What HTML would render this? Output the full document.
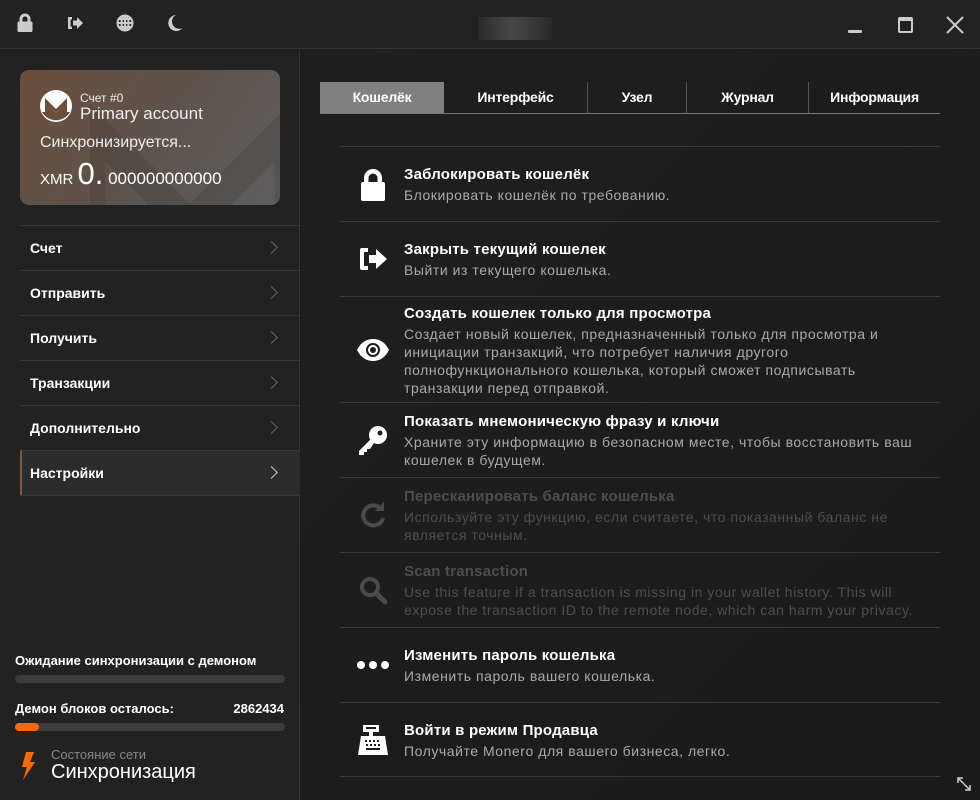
<!DOCTYPE html>
<html><head><meta charset="utf-8"><style>
*{margin:0;padding:0;box-sizing:border-box}
body{width:980px;height:800px;overflow:hidden;background:#1d1d1d;font-family:"Liberation Sans",sans-serif;color:#fff;position:relative}
.top{position:absolute;left:0;top:0;width:980px;height:49px;background:#222;border-bottom:1px solid #333}
.side{position:absolute;left:0;top:50px;width:300px;height:750px;background:#222;border-right:1px solid #333}
.main{position:absolute;left:301px;top:50px;width:679px;height:750px;background:linear-gradient(135deg,#1f1f1f,#1a1a1a)}
.card{position:absolute;left:20px;top:20px;width:260px;height:135px;border-radius:9px;background:linear-gradient(125deg,#6c4e3b 0%,#5d534d 50%,#5e5e5e 100%);overflow:hidden}
.menu{position:absolute;left:20px;width:280px;height:45px;border-top:1px solid #383838;font-size:14px;font-weight:bold;padding-left:10px;line-height:44px}
.menu .ch{position:absolute;right:24px;top:17px;width:9px;height:9px;border-right:1px solid #666;border-top:1px solid #666;transform:rotate(45deg)}
.tabs{position:absolute;left:19px;top:32px;width:620px;height:32px;border-bottom:1px solid #777;display:flex}
.tab{height:31px;line-height:31px;text-align:center;font-weight:bold;font-size:14px;border-right:1px solid #555;letter-spacing:-0.2px}
.row{position:absolute;left:39px;width:600px;border-top:1px solid #3a3a3a;display:flex;align-items:center}
.row .ic{position:absolute;left:16px;width:34px;height:34px}
.row .tx{margin-left:64px;width:530px}
.row b{display:block;font-size:15px;line-height:22px;letter-spacing:0.2px}
.row p{font-size:14px;line-height:18px;color:#aaa;letter-spacing:0.55px}
.row.dis b,.row.dis p{color:#4e4e4e}
.bar{position:absolute;left:15px;width:270px;height:8px;border-radius:4px;background:#3c3c3c}
</style></head><body>
<div class="top">
<svg style="position:absolute;left:16px;top:13px" width="18" height="19" viewBox="0 0 18 19" fill="#ccc"><path d="M3.5 9V6a5.5 5.5 0 0 1 11 0v3h-3V6a2.5 2.5 0 0 0-5 0v3z"/><rect x="1.5" y="8.5" width="15" height="10.5" rx="1.5"/></svg>
<svg style="position:absolute;left:66px;top:15px" width="18" height="16" viewBox="0 0 18 16" fill="#ccc"><path d="M6 2H2v12h4v-2.5H4.5v-7H6z"/><path d="M7 5.5h4V2l6 6-6 6v-3.5H7z"/></svg>
<svg style="position:absolute;left:116px;top:14px" width="18" height="18" viewBox="0 0 18 18" fill="none" stroke="#ccc" stroke-width="2"><circle cx="9" cy="9" r="7.5"/><path d="M1.5 9h15M9 1.5v15M3 5h12M3 13h12"/><ellipse cx="9" cy="9" rx="3.5" ry="7.5"/></svg>
<svg style="position:absolute;left:167px;top:14px" width="16" height="18" viewBox="0 0 16 18" fill="#ccc"><path d="M9 1a8 8 0 1 0 6.5 13A6.5 6.5 0 0 1 9 1z"/></svg>
<div style="position:absolute;left:478px;top:17px;width:74px;height:23px;background:linear-gradient(90deg,#2a2a2a,#484848 45%,#2a2a2a)"></div>
<div style="position:absolute;left:848px;top:30px;width:14px;height:3px;background:#ccc;border-radius:1px"></div>
<div style="position:absolute;left:898px;top:17px;width:15px;height:16px;border:2px solid #ccc;border-top-width:4px;border-radius:2px"></div>
<svg style="position:absolute;left:946px;top:16px" width="18" height="18" viewBox="0 0 18 18" stroke="#ccc" stroke-width="2"><path d="M1 1l16 16M17 1L1 17"/></svg>
</div>
<div class="side">
<div class="card">
<svg style="position:absolute;left:70px;top:25px;opacity:.15" width="260" height="180" viewBox="0 0 260 180" fill="none" stroke="#222" stroke-width="30"><path d="M0 180V30l100 100L200 30v150"/></svg>
<svg style="position:absolute;left:20px;top:20px" width="32" height="32" viewBox="0 0 32 32"><circle cx="16" cy="16" r="16" fill="#fff"/><path d="M5 22V8l11 11L27 8v14h-4v-6l-7 7-7-7v6z" fill="#6c4e3b"/><path d="M2 22h7v-6l7 7 7-7v6h7a16 16 0 0 1-28 0z" fill="#6c4e3b"/></svg>
<div style="position:absolute;left:60px;top:21px;font-size:12px;color:#eee">Счет #0</div>
<div style="position:absolute;left:60px;top:34px;font-size:17px;color:#eee">Primary account</div>
<div style="position:absolute;left:20px;top:64px;font-size:16px;color:#eee">Синхронизируется...</div>
<div style="position:absolute;left:20px;top:86px;color:#fff;white-space:nowrap"><span style="font-size:15px">XMR </span><span style="font-size:31px">0.</span><span style="font-size:17px"> 000000000000</span></div>
</div>
<div class="menu" style="top:175px">Счет<span class="ch"></span></div>
<div class="menu" style="top:220px">Отправить<span class="ch"></span></div>
<div class="menu" style="top:265px">Получить<span class="ch"></span></div>
<div class="menu" style="top:310px">Транзакции<span class="ch"></span></div>
<div class="menu" style="top:355px">Дополнительно<span class="ch"></span></div>
<div class="menu" style="top:400px;background:#2c2c2c;border-left:2px solid #7a5a44;padding-left:8px">Настройки<span class="ch" style="border-color:#ccc"></span></div>
<div style="position:absolute;left:20px;top:445px;width:280px;border-top:1px solid #383838"></div>
<div style="position:absolute;left:15px;top:603px;font-size:13px;font-weight:bold">Ожидание синхронизации с демоном</div>
<div class="bar" style="top:625px"></div>
<div style="position:absolute;left:15px;top:651px;font-size:13px;font-weight:bold">Демон блоков осталось:</div>
<div style="position:absolute;right:15px;top:651px;font-size:13px;font-weight:bold">2862434</div>
<div class="bar" style="top:673px"><div style="width:24px;height:8px;border-radius:4px;background:#ff6600"></div></div>
<svg style="position:absolute;left:20px;top:702px" width="16" height="28" viewBox="0 0 16 28" fill="#ff6a00"><path d="M6 0h8l-4 10h5L3 28l4-13H2z"/></svg>
<div style="position:absolute;left:51px;top:697px;font-size:13px;color:#888">Состояние сети</div>
<div style="position:absolute;left:51px;top:711px;font-size:20px">Синхронизация</div>
</div>
<div class="main">
<div class="tabs">
<div class="tab" style="width:124px;background:#808080;border-right:none">Кошелёк</div>
<div class="tab" style="width:144px">Интерфейс</div>
<div class="tab" style="width:99px">Узел</div>
<div class="tab" style="width:122px">Журнал</div>
<div class="tab" style="width:131px;border-right:none">Информация</div>
</div>
<div class="row" style="top:96px;height:75px"><svg class="ic" viewBox="0 0 34 34" fill="#fff"><path d="M8 16v-5a9 9 0 0 1 18 0v5h-4.5v-5a4.5 4.5 0 0 0-9 0v5z"/><rect x="5" y="15" width="24" height="19" rx="2"/></svg><div class="tx"><b>Заблокировать кошелёк</b><p>Блокировать кошелёк по требованию.</p></div></div>
<div class="row" style="top:171px;height:75px"><svg class="ic" viewBox="0 0 34 34" fill="#fff"><path d="M12 6H6a2 2 0 0 0-2 2v18a2 2 0 0 0 2 2h6v-4H8V10h4z"/><path d="M13 13h7V7l11 10-11 10v-6h-7z"/></svg><div class="tx"><b>Закрыть текущий кошелек</b><p>Выйти из текущего кошелька.</p></div></div>
<div class="row" style="top:246px;height:106px"><svg class="ic" viewBox="0 0 34 34"><path d="M1 17C5 9 11 6 17 6s12 3 16 11c-4 8-10 11-16 11S5 25 1 17z" fill="#fff"/><circle cx="17" cy="17" r="7" fill="#1d1d1d"/><circle cx="17" cy="17" r="5" fill="#fff"/><circle cx="17" cy="17" r="3" fill="#1d1d1d"/></svg><div class="tx"><b>Создать кошелек только для просмотра</b><p>Создает новый кошелек, предназначенный только для просмотра и инициации транзакций, что потребует наличия другого полнофункционального кошелька, который сможет подписывать транзакции перед отправкой.</p></div></div>
<div class="row" style="top:352px;height:75px"><svg class="ic" viewBox="0 0 34 34" fill="#fff"><circle cx="22" cy="12" r="9"/><path d="M15 16L3 28v4h5v-3h3v-3h3l4-6z"/><circle cx="24" cy="10" r="2.5" fill="#1d1d1d"/></svg><div class="tx"><b>Показать мнемоническую фразу и ключи</b><p>Храните эту информацию в безопасном месте, чтобы восстановить ваш кошелек в будущем.</p></div></div>
<div class="row dis" style="top:427px;height:75px"><svg class="ic" viewBox="0 0 34 34" fill="none" stroke="#4a4a4a" stroke-width="4"><path d="M27 20a10 10 0 1 1-3-10"/><path d="M28 4v9h-9" fill="#4a4a4a" stroke="none"/></svg><div class="tx"><b>Пересканировать баланс кошелька</b><p>Используйте эту функцию, если считаете, что показанный баланс не является точным.</p></div></div>
<div class="row dis" style="top:502px;height:75px"><svg class="ic" viewBox="0 0 34 34" fill="none" stroke="#4a4a4a" stroke-width="4"><circle cx="14" cy="14" r="8"/><path d="M20 20l9 9" stroke-linecap="round" stroke-width="5"/></svg><div class="tx"><b>Scan transaction</b><p>Use this feature if a transaction is missing in your wallet history. This will expose the transaction ID to the remote node, which can harm your privacy.</p></div></div>
<div class="row" style="top:577px;height:75px"><svg class="ic" viewBox="0 0 34 34" fill="#fff"><circle cx="5" cy="17" r="4"/><circle cx="17" cy="17" r="4"/><circle cx="29" cy="17" r="4"/></svg><div class="tx"><b>Изменить пароль кошелька</b><p>Изменить пароль вашего кошелька.</p></div></div>
<div class="row" style="top:652px;height:75px;border-bottom:1px solid #3a3a3a"><svg class="ic" viewBox="0 0 34 34" fill="#fff"><rect x="7" y="2" width="16" height="7"/><rect x="10" y="4" width="10" height="2" fill="#1d1d1d"/><rect x="13" y="9" width="4" height="4"/><path d="M5 13h24l3 19H2z"/><g fill="#1d1d1d"><rect x="9" y="17" width="2" height="2"/><rect x="13" y="17" width="2" height="2"/><rect x="17" y="17" width="2" height="2"/><rect x="21" y="17" width="2" height="2"/><rect x="10" y="21" width="2" height="2"/><rect x="14" y="21" width="2" height="2"/><rect x="18" y="21" width="2" height="2"/><rect x="22" y="21" width="2" height="2"/><rect x="10" y="25" width="14" height="2"/></g></svg><div class="tx"><b>Войти в режим Продавца</b><p>Получайте Monero для вашего бизнеса, легко.</p></div></div>
<svg style="position:absolute;left:656px;top:727px" width="14" height="14" viewBox="0 0 14 14" stroke="#ccc" stroke-width="1.5" fill="none"><path d="M1 1l12 12M1 6V1h5M13 8v5H8"/></svg>
</div>
</body></html>
